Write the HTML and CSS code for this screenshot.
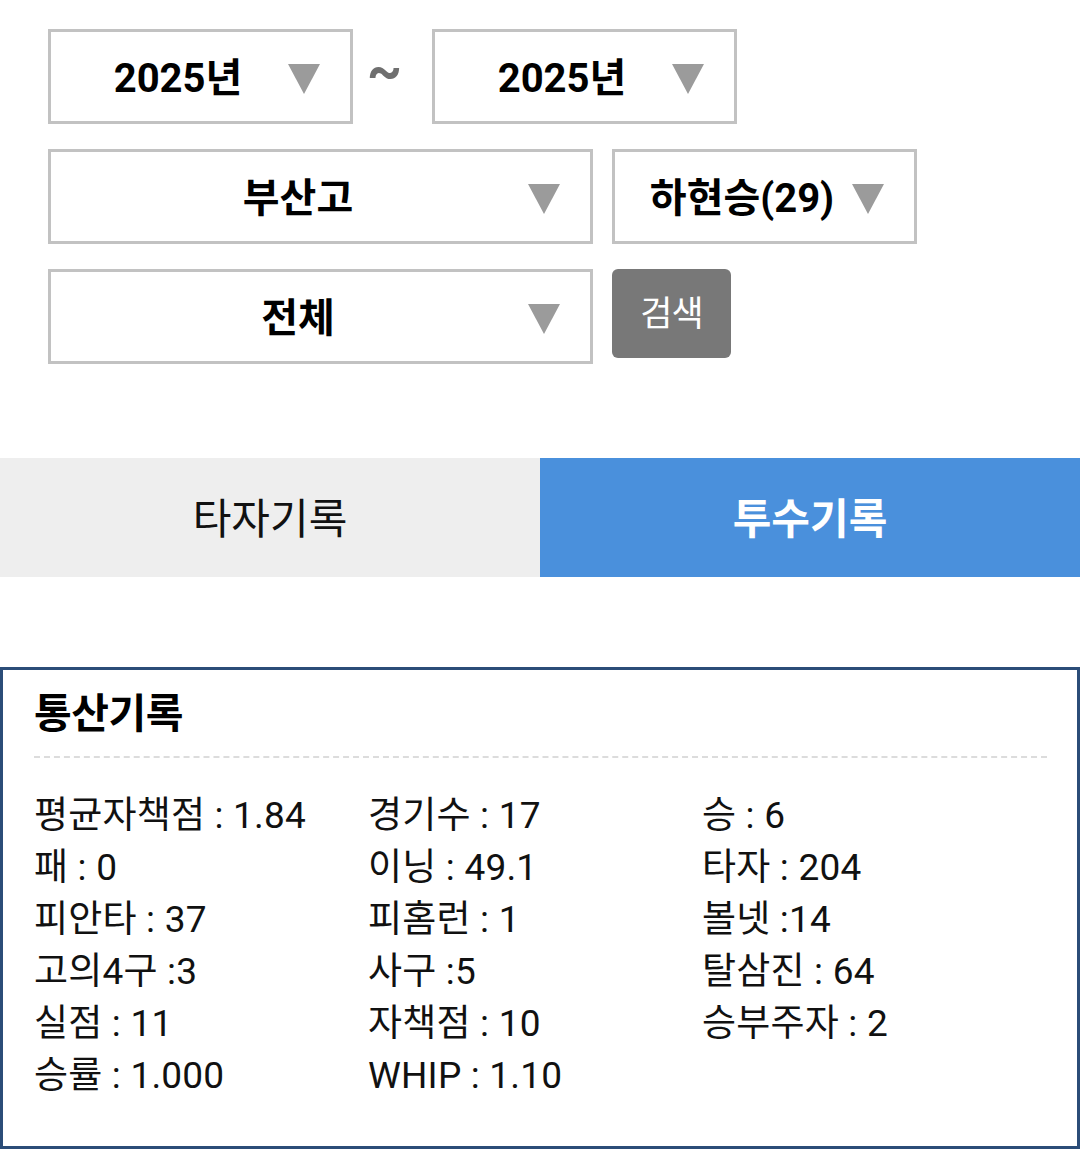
FILE: index.html
```html
<!DOCTYPE html>
<html lang="ko">
<head>
<meta charset="utf-8">
<link rel="stylesheet" href="styles.css">
</head>
<body>
<div class="filters">
  <div class="row">
    <div class="select sel-s"><span class="val">2025년</span><span class="arrow"></span></div>
    <div class="tilde">~</div>
    <div class="select sel-s"><span class="val">2025년</span><span class="arrow"></span></div>
  </div>
  <div class="row gap">
    <div class="select sel-l"><span class="val">부산고</span><span class="arrow"></span></div>
    <div class="select sel-s"><span class="val">하현승(29)</span><span class="arrow"></span></div>
  </div>
  <div class="row gap">
    <div class="select sel-l"><span class="val">전체</span><span class="arrow"></span></div>
    <div class="btn">검색</div>
  </div>
</div>

<div class="tabs">
  <div class="tab">타자기록</div>
  <div class="tab active">투수기록</div>
</div>

<div class="record">
  <div class="title">통산기록</div>
  <div class="divider"></div>
  <div class="stats">
    <div>평균자책점 : 1.84</div><div>경기수 : 17</div><div>승 : 6</div>
    <div>패 : 0</div><div>이닝 : 49.1</div><div>타자 : 204</div>
    <div>피안타 : 37</div><div>피홈런 : 1</div><div>볼넷 :14</div>
    <div>고의4구 :3</div><div>사구 :5</div><div>탈삼진 : 64</div>
    <div>실점 : 11</div><div>자책점 : 10</div><div>승부주자 : 2</div>
    <div>승률 : 1.000</div><div>WHIP : 1.10</div><div></div>
  </div>
</div>
</body>
</html>
```

FILE: styles.css
```css
* { box-sizing: border-box; }
body {
  margin: 0;
  background: #fff;
  font-family: Roboto, "Noto Sans CJK KR", sans-serif;
  color: #111;
}
.filters {
  padding: 29px 0 0 48px;
  display: flex;
  flex-direction: column;
  gap: 25px;
}
.row {
  display: flex;
  align-items: flex-start;
}
.row.gap { gap: 19px; }
.select {
  position: relative;
  height: 95px;
  border: 3px solid #c2c2c2;
  background: #fff;
  display: flex;
  align-items: center;
  justify-content: center;
  padding-right: 45px;
  padding-bottom: 4px;
}
.sel-s { width: 305px; }
.sel-l { width: 545px; }
.val {
  font-size: 40px;
  font-weight: 700;
  letter-spacing: 0;
  color: #000;
}
.arrow {
  position: absolute;
  right: 30px;
  top: 32px;
  width: 0;
  height: 0;
  border-left: 16px solid transparent;
  border-right: 16px solid transparent;
  border-top: 30px solid #9b9b9b;
}
.tilde {
  width: 79px;
  padding-right: 16px;
  text-align: center;
  font-size: 54px;
  font-weight: 700;
  color: #6f6f6f;
  line-height: 84px;
}
.btn {
  width: 119px;
  height: 89px;
  background: #787878;
  border-radius: 6px;
  color: #fff;
  font-size: 35px;
  letter-spacing: -1px;
  display: flex;
  align-items: center;
  justify-content: center;
  padding-bottom: 6px;
}
.tabs {
  margin-top: 94px;
  display: flex;
  height: 119px;
}
.tab {
  flex: 1;
  background: #eeeeee;
  display: flex;
  align-items: center;
  justify-content: center;
  font-size: 42px;
  letter-spacing: 0;
  color: #111;
  padding-bottom: 4px;
}
.tab.active {
  background: #4a90dc;
  color: #fff;
  font-weight: 700;
}
.record {
  margin-top: 90px;
  border: 3px solid #2b4d78;
  padding: 18px 31px 44px 31px;
}
.title {
  font-size: 41px;
  font-weight: 700;
  line-height: 52px;
  letter-spacing: -0.5px;
  color: #000;
}
.divider {
  margin-top: 16px;
  margin-right: -1px;
  border-top: 2px dashed #dcdcdc;
}
.stats {
  margin-top: 32px;
  display: grid;
  grid-template-columns: 334px 334px 1fr;
  font-size: 37px;
  line-height: 52px;
  letter-spacing: 0.2px;
  color: #111;
}
```
